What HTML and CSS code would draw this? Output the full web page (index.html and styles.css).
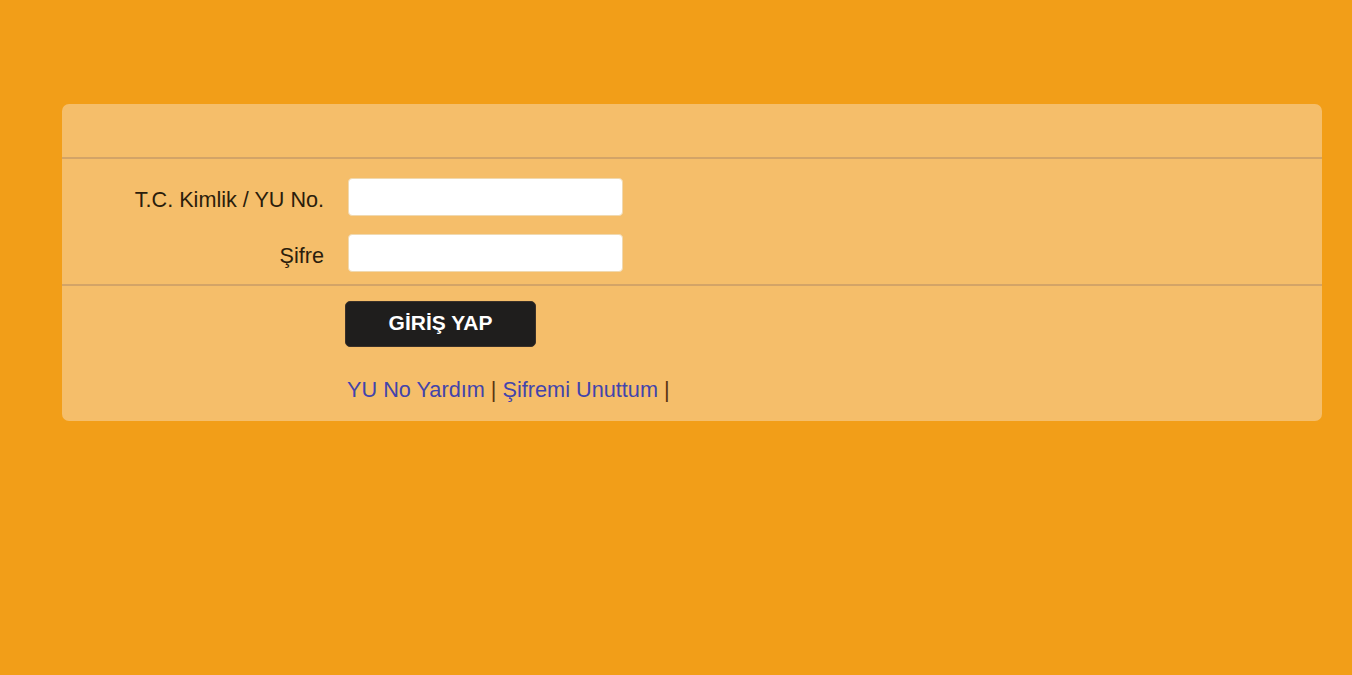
FILE: index.html
```html
<!DOCTYPE html>
<html lang="tr">
<head>
<meta charset="utf-8">
<link rel="stylesheet" href="styles.css">
</head>
<body>
<div class="panel">
  <div class="panel-head"></div>
  <div class="fields">
    <div class="row">
      <label class="lbl">T.C. Kimlik / YU No.</label>
      <input class="inp" type="text">
    </div>
    <div class="row">
      <label class="lbl">Şifre</label>
      <input class="inp" type="password">
    </div>
  </div>
  <div class="actions">
    <button class="btn">GİRİŞ YAP</button>
    <div class="links"><a href="#">YU No Yardım</a> | <a href="#">Şifremi Unuttum</a> |</div>
  </div>
</div>
</body>
</html>
```
FILE: styles.css
```css
html, body {
  margin: 0;
  padding: 0;
  background: #f29e18;
  height: 100%;
}
body {
  font-family: "Liberation Sans", Arial, sans-serif;
  padding: 104px 30px 0 62px;
  box-sizing: border-box;
}
.panel {
  background: #f5be6a;
  border-radius: 7px;
  height: 317px;
  box-sizing: border-box;
}
.panel-head {
  height: 53px;
  border-bottom: 2px solid #d3a467;
}
.fields {
  padding: 19px 0 12px;
  border-bottom: 2px solid #d3a467;
}
.row {
  display: flex;
  align-items: center;
  height: 38px;
  margin-bottom: 18px;
}
.row:last-child {
  margin-bottom: 0;
}
.lbl {
  width: 262px;
  text-align: right;
  font-size: 21.6px;
  line-height: 1;
  padding-top: 6px;
  color: #2b1d0c;
}
.inp {
  margin-left: 24px;
  width: 275px;
  height: 38px;
  box-sizing: border-box;
  border: 1px solid #f0d9b0;
  border-radius: 4px;
  background: #fff;
  outline: none;
}
.actions {
  padding: 15px 0 0 283px;
}
.btn {
  display: block;
  width: 191px;
  height: 46px;
  background: #1f1e1d;
  color: #fff;
  border: 1px solid #3a3028;
  border-radius: 5px;
  font-family: "Liberation Sans", Arial, sans-serif;
  font-weight: bold;
  font-size: 21px;
  padding: 0 0 2px;
  cursor: pointer;
}
.links {
  margin-top: 30px;
  margin-left: 2px;
  font-size: 21.7px;
  color: #5a3412;
}
.links a {
  color: #4244ac;
  text-decoration: none;
}
```
